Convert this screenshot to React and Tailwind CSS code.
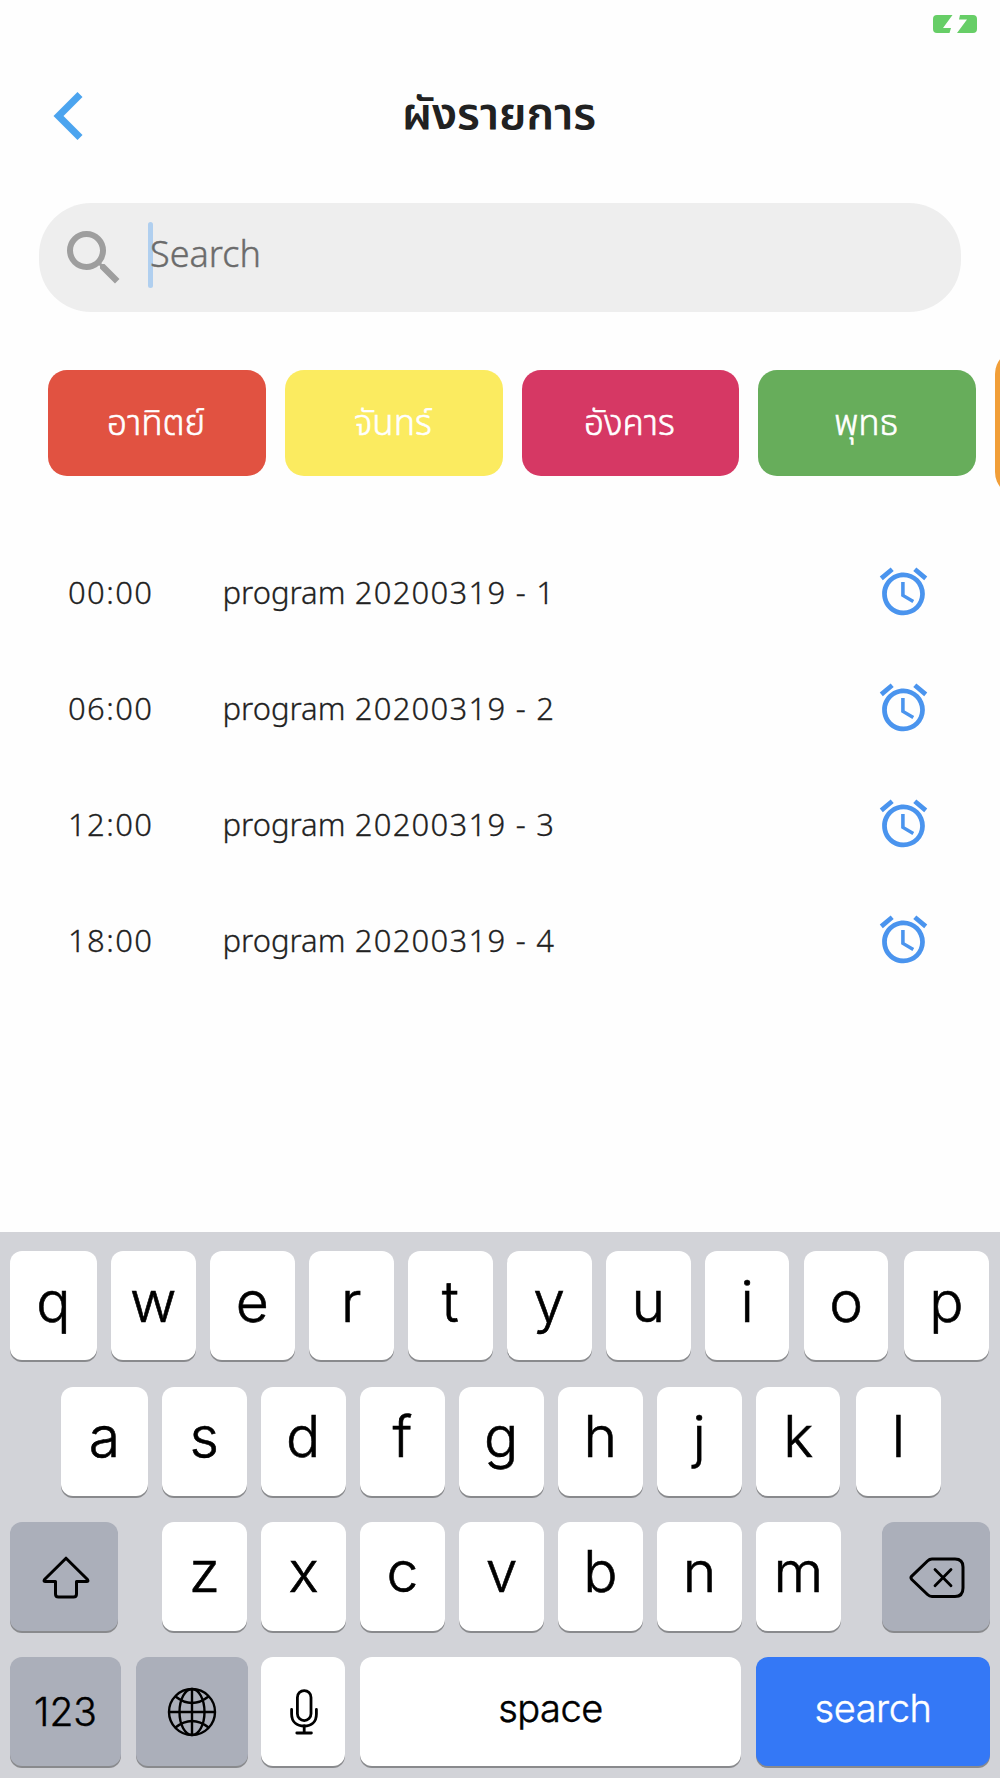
import { MdAlarm, MdSearch } from 'react-icons/md'
import clsx from 'clsx'

const DAYS = [
  { label: 'อาทิตย์', color: 'bg-[#e15241]' },
  { label: 'จันทร์', color: 'bg-[#fbeb60]' },
  { label: 'อังคาร', color: 'bg-[#d63864]' },
  { label: 'พุทธ', color: 'bg-[#67ad5b]' },
]

const PROGRAMS = [
  { time: '00:00', name: 'program', code: '20200319 - 1' },
  { time: '06:00', name: 'program', code: '20200319 - 2' },
  { time: '12:00', name: 'program', code: '20200319 - 3' },
  { time: '18:00', name: 'program', code: '20200319 - 4' },
]

function Key({ children, className }) {
  return (
    <button
      className={clsx(
        'h-[109px] shrink-0 rounded-[12px] flex items-center justify-center shadow-[0_2px_0_#898a8d]',
        className
      )}
    >
      {children}
    </button>
  )
}

function LetterKey({ letter, className = 'w-[84.6px]' }) {
  return (
    <Key className={clsx('bg-white', className)}>
      <span className="text-[57px] leading-[57px] font-light pb-[9px] [-webkit-text-stroke:0.6px_#000]">{letter}</span>
    </Key>
  )
}

function ShiftIcon() {
  return (
    <svg width="48" height="43" viewBox="0 0 48 43" fill="none" stroke="#000" strokeWidth="3" strokeLinejoin="round">
      <path d="M24 2.2 L45.5 23.5 Q46.8 25.6 44.5 25.6 H34.5 V38 Q34.5 41 31.5 41 H16.5 Q13.5 41 13.5 38 V25.6 H3.5 Q1.2 25.6 2.5 23.5 Z" />
    </svg>
  )
}

function DeleteIcon() {
  return (
    <svg width="56" height="42" viewBox="0 0 56 42" fill="none" stroke="#000" strokeWidth="3" strokeLinecap="round" strokeLinejoin="round">
      <path d="M23 2 H46 Q54 2 54 10 V31 Q54 39.5 46 39.5 H23 Q20.5 39.5 18.5 37.5 L2.8 22.5 Q1.2 20.8 2.8 19.1 L18.5 4 Q20.5 2 23 2 Z" />
      <path d="M26 12.5 L42 28.8 M42 12.5 L26 28.8" strokeWidth="2.8" />
    </svg>
  )
}

function GlobeIcon() {
  return (
    <svg width="50" height="50" viewBox="0 0 50 50" fill="none" stroke="#000" strokeWidth="2.4">
      <circle cx="25" cy="25" r="23" />
      <ellipse cx="25" cy="25" rx="12.5" ry="23" />
      <path d="M25 2 V48 M2 25 H48" />
      <path d="M8.5 9.5 Q25 22.5 41.5 9.5 M8.5 40.5 Q25 27.5 41.5 40.5" />
    </svg>
  )
}

function MicIcon() {
  return (
    <svg width="28" height="46" viewBox="0 0 28 46" fill="none" stroke="#000" strokeWidth="2.8" strokeLinecap="round">
      <rect x="7.4" y="1.6" width="13.6" height="30" rx="6.8" />
      <path d="M1.6 20.5 V25 C1.6 33 7 37 14.2 37 C21.4 37 26.4 33 26.4 25 V20.5" />
      <path d="M14.2 37 V44 M6.8 44 H21.4" />
    </svg>
  )
}

function Keyboard() {
  return (
    <div className="h-[546px] pt-[19.2px] bg-[#d2d3d8] text-black font-['Inter',sans-serif] flex flex-col gap-[26.4px]">
      <div className="flex gap-[14.4px] pl-[10px]">
        <LetterKey letter="q" className="w-[86.6px]" />
        {'wertyuio'.split('').map(l => (
          <LetterKey key={l} letter={l} />
        ))}
        <LetterKey letter="p" className="w-[85px] ml-[1px]" />
      </div>

      <div className="flex gap-[14.4px] pl-[61px]">
        <LetterKey letter="a" className="w-[86.6px]" />
        {'sdfghjk'.split('').map(l => (
          <LetterKey key={l} letter={l} />
        ))}
        <LetterKey letter="l" className="w-[85px] ml-[1px]" />
      </div>

      <div className="flex justify-between px-[10px]">
        <Key className="w-[108px] bg-[#abafba]">
          <span className="pt-[3px] pl-[4px]"><ShiftIcon /></span>
        </Key>
        <div className="flex gap-[14.4px] pl-[3px]">
          {'zxcvbnm'.split('').map(l => (
            <LetterKey key={l} letter={l} />
          ))}
        </div>
        <Key className="w-[108px] bg-[#abafba]">
          <span className="pt-[3px] pl-[1px]"><DeleteIcon /></span>
        </Key>
      </div>

      <div className="flex pl-[10px]">
        <Key className="w-[111px] mr-[15px] bg-[#abafba] text-[39px] font-light">
          <span className="pt-px [-webkit-text-stroke:0.4px_#000]">123</span>
        </Key>
        <Key className="w-[112px] mr-[13px] bg-[#abafba]">
          <GlobeIcon />
        </Key>
        <Key className="w-[84px] mr-[15px] bg-white">
          <span className="pl-[2px] pt-[1px]"><MicIcon /></span>
        </Key>
        <Key className="w-[381px] mr-[15px] bg-white text-[38px] font-light">
          <span className="pb-[7px] tracking-[-0.5px] [-webkit-text-stroke:0.5px_#000]">space</span>
        </Key>
        <Key className="w-[234px] bg-[#3478f6] text-white text-[38px] font-light">
          <span className="pb-[7px] tracking-[-0.4px] [-webkit-text-stroke:0.4px_#fff]">search</span>
        </Key>
      </div>
    </div>
  )
}

export default function App() {
  return (
    <div className="w-[1000px] h-[1778px] bg-[#fefefe] text-[#212121] overflow-hidden flex flex-col font-['Noto_Sans','Noto_Sans_Thai',sans-serif]">
      {/* Status bar */}
      <div className="h-[40px] pt-[15px] pr-[23px] flex justify-end shrink-0">
        <svg width="44" height="18" viewBox="0 0 44 18" fill="#67ce67">
          <path d="M4 0 H19.5 L10 13 H18 L16.5 18 H4 Q0 18 0 14 V4 Q0 0 4 0 Z" />
          <path d="M27 0 H40 Q44 0 44 4 V14 Q44 18 40 18 H24 L34 4.5 H26 Z" />
        </svg>
      </div>

      {/* Header */}
      <div className="h-[152px] shrink-0 grid grid-cols-[200px_1fr_200px] items-center">
        <button className="pl-[53px]">
          <svg width="30" height="48" viewBox="0 0 30 48" fill="#4ba4ef">
            <path d="M24.5 0 L29.5 5 L10.5 24 L29.5 43 L24.5 48 L0.5 24 Z" />
          </svg>
        </button>
        <h1 className="text-center text-[45px] leading-[60px] font-semibold pb-[8px] pr-[2px]">ผังรายการ</h1>
      </div>

      {/* Search box */}
      <div className="mt-[11px] mx-[39px] h-[109px] shrink-0 rounded-[52px] bg-[#eeeeee] flex items-center">
        <MdSearch className="size-[72px] ml-[19px] text-[#9e9e9e]" />
        <div className="ml-[18px] mb-[5px] w-[5px] h-[66px] rounded-full bg-[#b0cfef]" />
        <span className="-ml-[3px] mb-[8px] text-[36px] leading-[50px] font-light text-[#6b6b6b] [-webkit-text-stroke:0.4px_#6b6b6b]">Search</span>
      </div>

      {/* Day filter */}
      <div className="mt-[38px] h-[146px] shrink-0 flex items-center gap-[19px] pl-[48.3px] overflow-hidden">
        {DAYS.map(day => (
          <button
            key={day.label}
            className={clsx('w-[217.7px] h-[106px] shrink-0 rounded-[19px] text-white text-[35px] leading-[44px] font-light pr-[2px] pb-[2px] [-webkit-text-stroke:0.6px_#fff]', day.color)}
          >
            {day.label}
          </button>
        ))}
        <div className="w-[250px] h-[146px] shrink-0 rounded-[24px] bg-[#f19e38]" />
      </div>

      {/* Programs */}
      <div className="pt-[37px] flex-1">
        {PROGRAMS.map(p => (
          <div key={p.time} className="h-[116px] flex items-center pl-[67px] pr-[68px] text-[31px] leading-[44px] font-light [-webkit-text-stroke:0.3px_#212121]">
            <span className="w-[155px] pl-px pt-[1px] tracking-[1.4px]">{p.time}</span>
            <span className="flex-1 pt-[1px] pl-[0.5px]">
              {p.name}
              <span className="tracking-[1.25px]"> {p.code}</span>
            </span>
            <MdAlarm className="size-[57px] mt-[1px] text-[#4a94ee]" stroke="none" />
          </div>
        ))}
      </div>

      <Keyboard />
    </div>
  )
}
